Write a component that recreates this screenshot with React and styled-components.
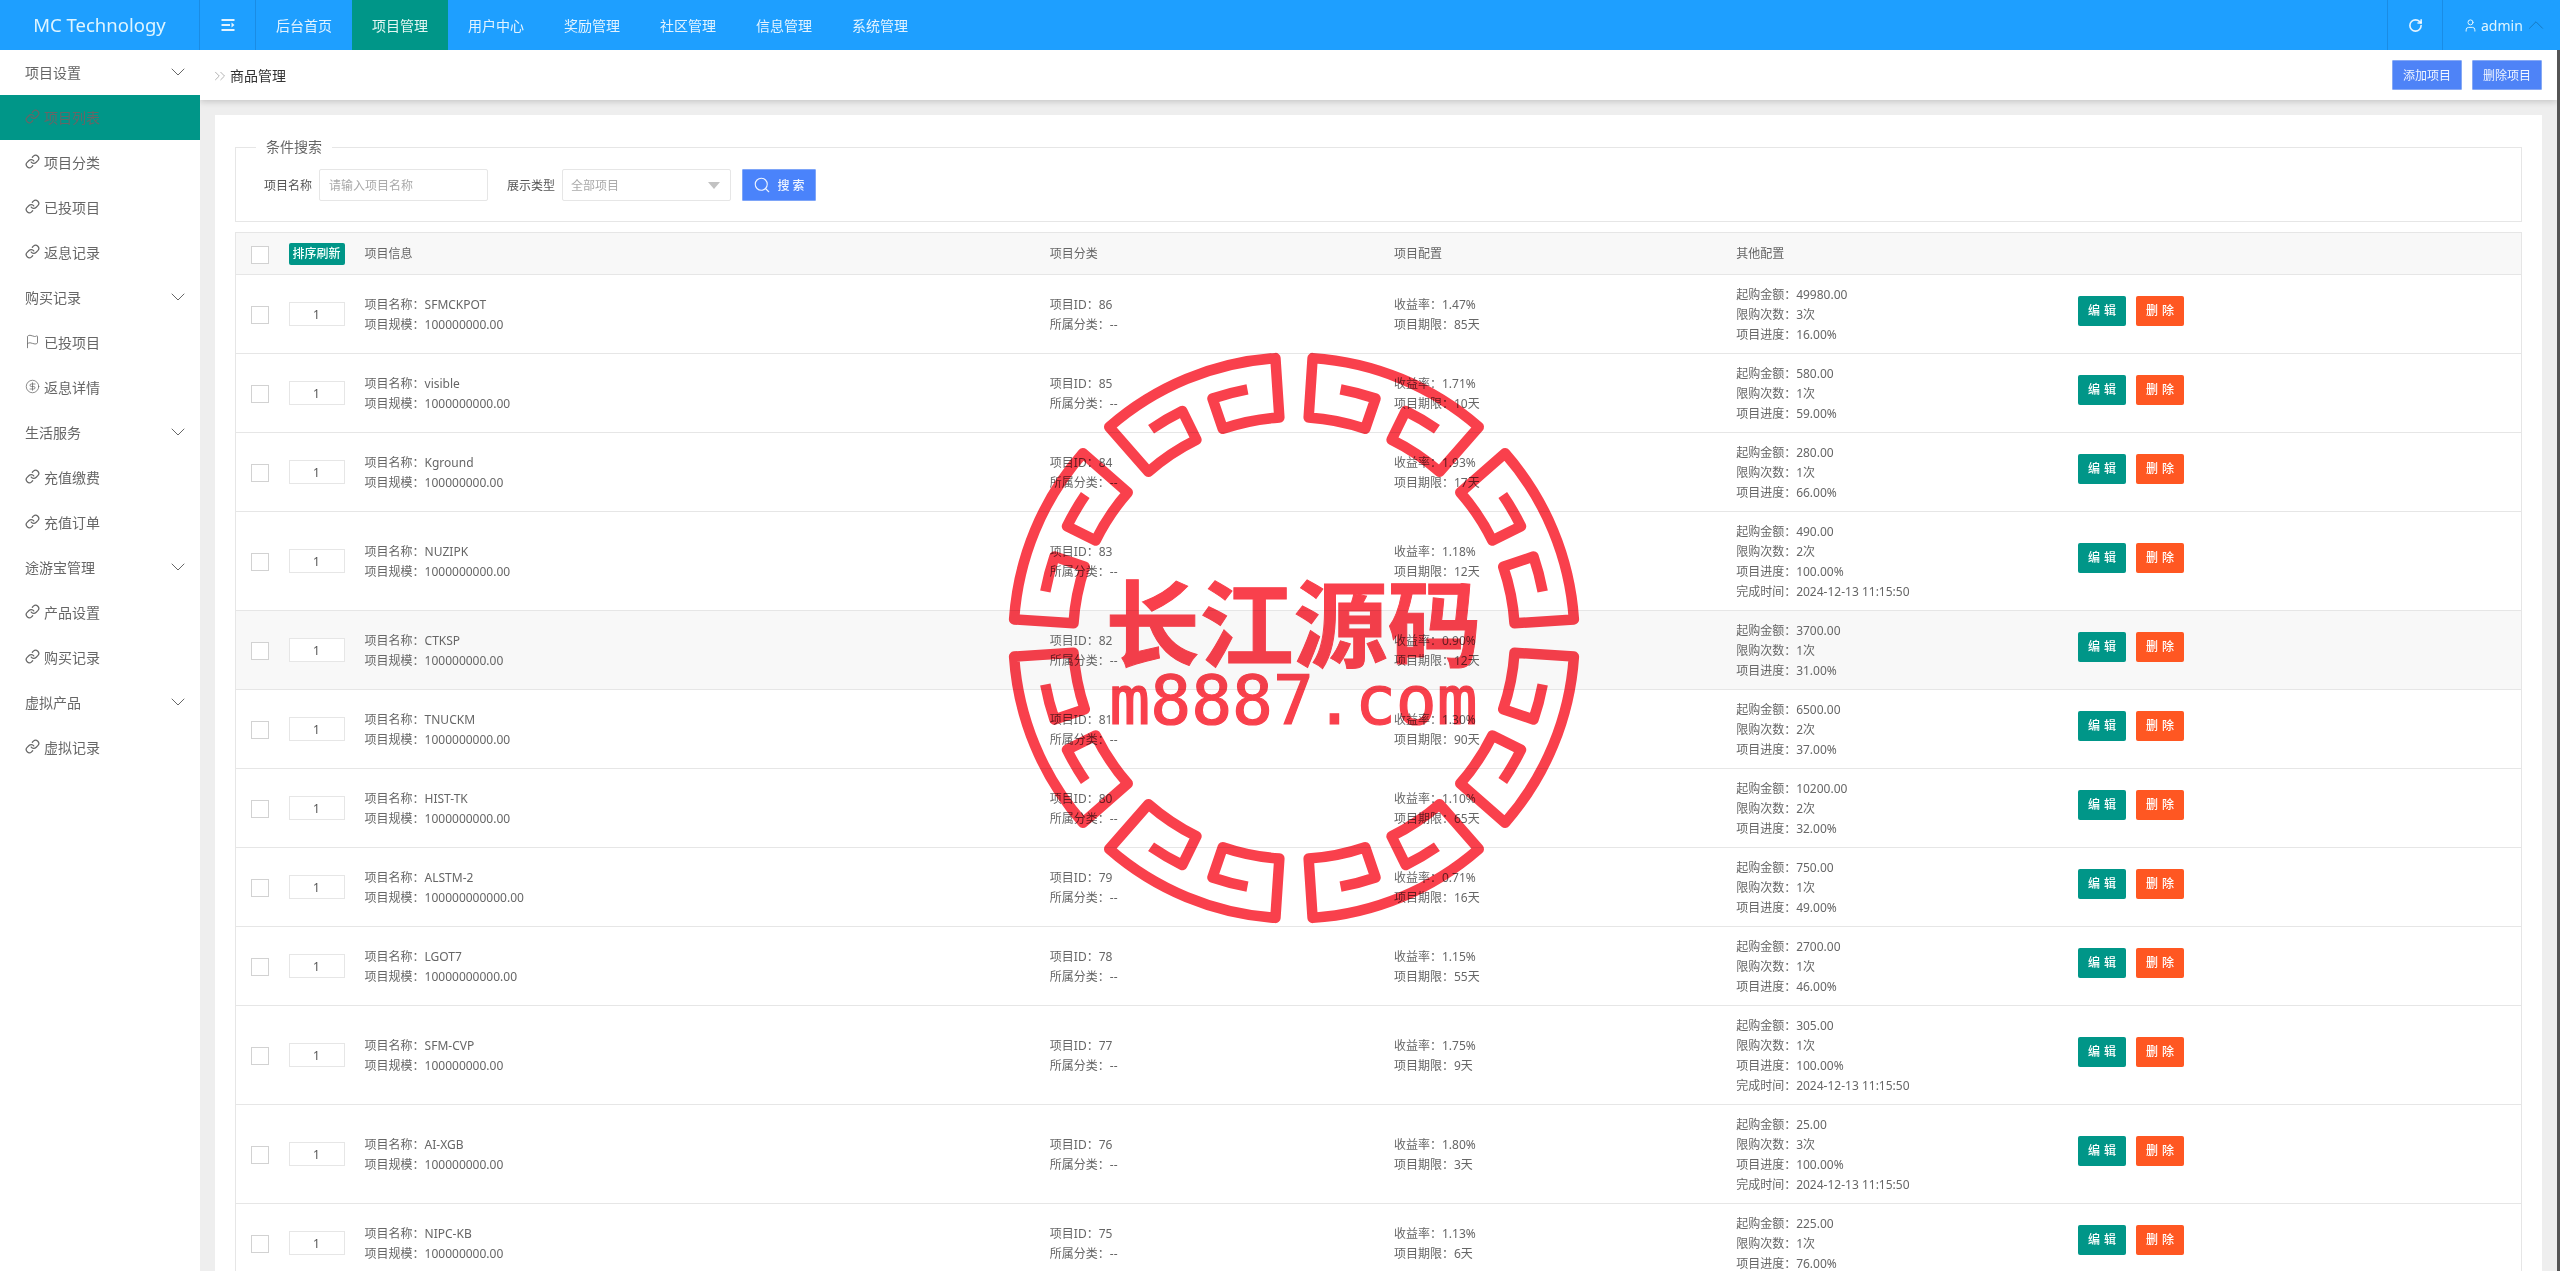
import React from "react";
import styled, { createGlobalStyle } from "styled-components";
import { ChevronDown, ChevronUp, ChevronsRight, CircleDollarSign, Flag, Link, RotateCw, Search, User } from "lucide-react";

const FONT = `"Noto Sans", "Noto Sans CJK SC", sans-serif`;

const Global = createGlobalStyle`
  * { box-sizing: border-box; }
  html, body { margin: 0; padding: 0; height: 100%; overflow: hidden; background: #fff; }
  body { font-family: ${FONT}; font-size: 12px; color: #666; }
`;

const Shell = styled.div`
  position: relative;
  display: flex;
  flex-direction: column;
  height: 100vh;
  overflow: hidden;
`;

/* ---------- top bar ---------- */
const TopBar = styled.header`
  display: flex;
  flex: 0 0 50px;
  height: 50px;
  background: #1e9fff;
  color: rgba(255, 255, 255, 0.88);
`;
const Logo = styled.div`
  flex: 0 0 200px;
  display: flex;
  align-items: center;
  justify-content: center;
  border-right: 1px solid #1a8ce4;
  font-size: 18.5px;
  color: #dff5ff;
  padding-bottom: 2px;
`;
const MenuToggle = styled.div`
  flex: 0 0 56px;
  display: flex;
  align-items: center;
  justify-content: center;
  border-right: 1px solid #1a8ce4;
`;
const NavItem = styled.div`
  flex: 0 0 96px;
  display: flex;
  align-items: center;
  justify-content: center;
  font-size: 14px;
  background: ${(p) => (p.$active ? "#009688" : "transparent")};
  color: ${(p) => (p.$active ? "#e4f7f3" : "inherit")};
`;
const Spacer = styled.div`
  flex: 1;
`;
const RefreshCell = styled.div`
  flex: 0 0 56px;
  display: flex;
  align-items: center;
  justify-content: center;
  border-left: 1px solid #1a8ce4;
  border-right: 1px solid #1a8ce4;
`;
const UserCell = styled.div`
  flex: 0 0 117px;
  display: flex;
  align-items: center;
  padding-left: 20px;
  font-size: 14px;
  gap: 3px;
  color: #dff5ff;
`;
const UserCaret = styled(ChevronUp)`
  color: #1578c0;
  margin-left: -3px;
`;

/* ---------- layout ---------- */
const Body = styled.div`
  flex: 1;
  display: flex;
  min-height: 0;
`;
const Sidebar = styled.nav`
  flex: 0 0 200px;
  background: #fff;
`;
const SideRow = styled.div`
  display: flex;
  align-items: center;
  height: 45px;
  padding: 0 10px 2px 25px;
  font-size: 14px;
  color: #666;
  background: ${(p) => (p.$active ? "#009688" : "#fff")};
  justify-content: ${(p) => (p.$group ? "space-between" : "flex-start")};
  gap: 4px;
`;
const Main = styled.main`
  flex: 1;
  min-width: 0;
  background: #eee;
  border-right: 3px solid #555;
  overflow: hidden;
`;
const SubHeader = styled.div`
  position: relative;
  height: 50px;
  background: #fff;
  display: flex;
  align-items: center;
  justify-content: space-between;
  padding: 0 15px;
  box-shadow: 0 2px 6px rgba(0, 0, 0, 0.16);
`;
const Crumb = styled.div`
  display: flex;
  align-items: center;
  gap: 1px;
  font-size: 14px;
  color: #333;
  padding-bottom: 1px;
  svg { color: #999; margin-left: -4px; margin-top: 3px; }
`;
const TopActions = styled.div`
  display: flex;
  gap: 10px;
`;
const BlueButton = styled.button`
  height: 30px;
  width: 70px;
  padding: 0;
  font: inherit;
  font-size: 12px;
  color: #f0f5ff;
  background: #4e83f7;
  border: 1px solid #86a9f5;
  border-radius: 1px;
`;
const Card = styled.section`
  margin: 15px 15px 0;
  padding: 22px 20px 0;
  background: #fff;
`;

/* ---------- search ---------- */
const SearchBox = styled.fieldset`
  margin: 0 0 10px;
  padding: 12px 28px 20px;
  border: 1px solid #e6e6e6;
  height: 85px;
  min-width: 0;
`;
const SearchLegend = styled.legend`
  margin-left: -8px;
  padding: 0 10px;
  font-size: 14px;
  line-height: 20px;
  color: #666;
`;
const SearchRow = styled.div`
  display: flex;
  align-items: center;
`;
const FieldLabel = styled.label`
  font-size: 12px;
  color: #555;
  margin-right: 7px;
`;
const TextField = styled.input`
  width: 169px;
  height: 32px;
  padding: 0 9px;
  margin-right: 19px;
  font: inherit;
  font-size: 12px;
  border: 1px solid #e6e6e6;
  border-radius: 2px;
  &::placeholder { color: #aaa; opacity: 1; }
`;
const SelectBox = styled.div`
  display: flex;
  align-items: center;
  justify-content: space-between;
  width: 169px;
  height: 32px;
  padding: 0 10px 0 8px;
  margin-right: 11px;
  border: 1px solid #e6e6e6;
  border-radius: 2px;
  color: #aaa;
  &::after {
    content: "";
    border: 6px solid transparent;
    border-top: 7px solid #c2c2c2;
    border-bottom: 0;
  }
`;
const SearchButton = styled.button`
  display: flex;
  align-items: center;
  justify-content: center;
  gap: 6px;
  width: 74px;
  height: 32px;
  padding: 0;
  font: inherit;
  font-size: 12px;
  font-weight: 500;
  color: #eef4ff;
  background: #4a83fb;
  border: 1px solid #7ea5f8;
  border-radius: 1px;
`;

/* ---------- table ---------- */
const Table = styled.table`
  width: 2287px;
  table-layout: fixed;
  border-collapse: collapse;
  border: 1px solid #e6e6e6;
  font-size: 12px;
  line-height: 20px;
  color: #666;
`;
const HeadRow = styled.tr`
  height: 42px;
  background: #f8f8f8;
`;
const Row = styled.tr`
  background: ${(p) => (p.$hover ? "#f8f8f8" : "#fff")};
`;
const Th = styled.th`
  padding: 0;
  font-weight: 400;
  text-align: left;
  border-bottom: 1px solid #e6e6e6;
`;
const Td = styled.td`
  padding: ${(p) => (p.$text ? "10px 0 8px" : "9px 0")};
  vertical-align: middle;
  border-bottom: 1px solid #e6e6e6;
`;
const CheckCell = styled.div`
  padding-left: 15px;
  display: flex;
  padding-top: 2px;
`;
const Check = styled.input.attrs({ type: "checkbox" })`
  appearance: none;
  display: block;
  width: 18px;
  height: 18px;
  margin: 0;
  background: #fff;
  border: 1px solid #d2d2d2;
`;
const SortButton = styled.button`
  display: block;
  width: 56px;
  height: 22px;
  padding: 0;
  font: inherit;
  font-size: 12px;
  font-weight: 500;
  line-height: 22px;
  color: #f2fffb;
  background: #009688;
  border: 0;
  border-radius: 2px;
`;
const SortInput = styled.input`
  display: block;
  width: 56px;
  height: 24px;
  padding: 0;
  font: inherit;
  font-size: 12px;
  color: #555;
  text-align: center;
  background: #fff;
  border: 1px solid #e6e6e6;
`;
const Line = styled.div`
  white-space: nowrap;
`;
const RowActions = styled.div`
  display: flex;
  gap: 10px;
  margin-bottom: 6px;
`;
const RowButton = styled.button`
  width: 48px;
  height: 30px;
  padding: 0;
  font: inherit;
  font-size: 12px;
  font-weight: 500;
  letter-spacing: 0.5px;
  color: #fff;
  background: ${(p) => (p.$danger ? "#ff5722" : "#009688")};
  border: 0;
  border-radius: 2px;
`;

/* ---------- stamp ---------- */
const Stamp = styled.div`
  position: absolute;
  left: 1003.5px;
  top: 347.5px;
  width: 580px;
  height: 580px;
  display: flex;
  flex-direction: column;
  align-items: center;
  pointer-events: none;
  mix-blend-mode: multiply;
  color: #f9404c;
`;
const StampRing = styled.svg`
  position: absolute;
  inset: 0;
`;
const StampTitle = styled.div`
  margin-top: 221px;
  font-family: "Noto Sans CJK SC", sans-serif;
  font-weight: 700;
  font-size: 94px;
  line-height: 100px;
  white-space: nowrap;
  -webkit-text-stroke: 1px #f9404c;
`;
const StampSite = styled.div`
  margin-top: -2px;
  font-family: "DejaVu Sans Mono", monospace;
  font-size: 68px;
  line-height: 68px;
  white-space: nowrap;
  -webkit-text-stroke: 1.2px #f9404c;
`;

const pt = (r, deg) => {
  const a = (deg * Math.PI) / 180;
  return `${(r * Math.sin(a)).toFixed(2)} ${(-r * Math.cos(a)).toFixed(2)}`;
};
const arc = (r, deg, sweep) => `A ${r} ${r} 0 0 ${sweep} ${pt(r, deg)}`;
const KEY_PATH = [
  `M ${pt(253, 10.6)}`,
  arc(253, 18.8, 1),
  `L ${pt(221, 18.8)}`,
  arc(221, 3.8, 0),
  `L ${pt(280.5, 3.8)}`,
  arc(280.5, 41.2, 1),
  `L ${pt(221, 41.2)}`,
  arc(221, 26.2, 0),
  `L ${pt(253, 26.2)}`,
  arc(253, 34.4, 1),
].join(" ");

const ShrinkIcon = () => (
  <svg width="14" height="14" viewBox="0 0 14 14" fill="none" stroke="currentColor" strokeWidth="2">
    <path d="M0.5 2h13M0.5 7h8.5M0.5 12h13" />
    <path d="M10.5 4.5 13.5 7 10.5 9.5z" fill="currentColor" stroke="none" />
  </svg>
);

const SIDE = [
  { t: "项目设置", g: 1 },
  { t: "项目列表", a: 1 },
  { t: "项目分类" },
  { t: "已投项目" },
  { t: "返息记录" },
  { t: "购买记录", g: 1 },
  { t: "已投项目", i: "flag" },
  { t: "返息详情", i: "dollar" },
  { t: "生活服务", g: 1 },
  { t: "充值缴费" },
  { t: "充值订单" },
  { t: "途游宝管理", g: 1 },
  { t: "产品设置" },
  { t: "购买记录" },
  { t: "虚拟产品", g: 1 },
  { t: "虚拟记录" },
];
const NAV = ["后台首页", "项目管理", "用户中心", "奖励管理", "社区管理", "信息管理", "系统管理"];
const DONE = "2024-12-13 11:15:50";
const ROWS = [
  [86, "SFMCKPOT", "100000000.00", "1.47%", "85天", "49980.00", "3次", "16.00%"],
  [85, "visible", "1000000000.00", "1.71%", "10天", "580.00", "1次", "59.00%"],
  [84, "Kground", "100000000.00", "1.93%", "17天", "280.00", "1次", "66.00%"],
  [83, "NUZIPK", "1000000000.00", "1.18%", "12天", "490.00", "2次", "100.00%", DONE],
  [82, "CTKSP", "100000000.00", "0.90%", "12天", "3700.00", "1次", "31.00%"],
  [81, "TNUCKM", "1000000000.00", "1.30%", "90天", "6500.00", "2次", "37.00%"],
  [80, "HIST-TK", "1000000000.00", "1.10%", "65天", "10200.00", "2次", "32.00%"],
  [79, "ALSTM-2", "100000000000.00", "0.71%", "16天", "750.00", "1次", "49.00%"],
  [78, "LGOT7", "10000000000.00", "1.15%", "55天", "2700.00", "1次", "46.00%"],
  [77, "SFM-CVP", "100000000.00", "1.75%", "9天", "305.00", "1次", "100.00%", DONE],
  [76, "AI-XGB", "100000000.00", "1.80%", "3天", "25.00", "3次", "100.00%", DONE],
  [75, "NIPC-KB", "100000000.00", "1.13%", "6天", "225.00", "1次", "76.00%"],
];
const COLS = [53, 76, 685, 344, 342, 342, 443];

const SideIcon = ({ kind }) => {
  if (kind === "flag") return <Flag size={15} strokeWidth={1.3} />;
  if (kind === "dollar") return <CircleDollarSign size={15} strokeWidth={1.2} />;
  return <Link size={15} strokeWidth={2} />;
};

export default function App() {
  return (
    <Shell>
      <Global />
      <TopBar>
        <Logo>MC Technology</Logo>
        <MenuToggle><ShrinkIcon /></MenuToggle>
        {NAV.map((n, i) => (
          <NavItem key={n} $active={i === 1}>{n}</NavItem>
        ))}
        <Spacer />
        <RefreshCell><RotateCw size={15} strokeWidth={2.6} /></RefreshCell>
        <UserCell>
          <User size={15} strokeWidth={1.6} />
          admin
          <UserCaret size={26} strokeWidth={0.9} />
        </UserCell>
      </TopBar>
      <Body>
        <Sidebar>
          {SIDE.map((s, i) => (
            <SideRow key={i} $group={!!s.g} $active={!!s.a}>
              {!s.g && <SideIcon kind={s.i} />}
              {s.t}
              {s.g && <ChevronDown size={24} strokeWidth={1} />}
            </SideRow>
          ))}
        </Sidebar>
        <Main>
          <SubHeader>
            <Crumb>
              <ChevronsRight size={18} strokeWidth={1} />
              商品管理
            </Crumb>
            <TopActions>
              <BlueButton>添加项目</BlueButton>
              <BlueButton>删除项目</BlueButton>
            </TopActions>
          </SubHeader>
          <Card>
            <SearchBox>
              <SearchLegend>条件搜索</SearchLegend>
              <SearchRow>
                <FieldLabel>项目名称</FieldLabel>
                <TextField placeholder="请输入项目名称" />
                <FieldLabel>展示类型</FieldLabel>
                <SelectBox>全部项目</SelectBox>
                <SearchButton>
                  <Search size={18} strokeWidth={1.5} />
                  搜 索
                </SearchButton>
              </SearchRow>
            </SearchBox>
            <Table>
              <colgroup>
                {COLS.map((w, i) => (
                  <col key={i} width={w} />
                ))}
              </colgroup>
              <thead>
                <HeadRow>
                  <Th><CheckCell><Check /></CheckCell></Th>
                  <Th><SortButton>排序刷新</SortButton></Th>
                  <Th>项目信息</Th>
                  <Th>项目分类</Th>
                  <Th>项目配置</Th>
                  <Th>其他配置</Th>
                  <Th />
                </HeadRow>
              </thead>
              <tbody>
                {ROWS.map((r) => (
                  <Row key={r[0]} $hover={r[0] === 82}>
                    <Td><CheckCell><Check /></CheckCell></Td>
                    <Td><SortInput defaultValue="1" /></Td>
                    <Td $text>
                      <Line>项目名称：{r[1]}</Line>
                      <Line>项目规模：{r[2]}</Line>
                    </Td>
                    <Td $text>
                      <Line>项目ID：{r[0]}</Line>
                      <Line>所属分类：--</Line>
                    </Td>
                    <Td $text>
                      <Line>收益率：{r[3]}</Line>
                      <Line>项目期限：{r[4]}</Line>
                    </Td>
                    <Td $text>
                      <Line>起购金额：{r[5]}</Line>
                      <Line>限购次数：{r[6]}</Line>
                      <Line>项目进度：{r[7]}</Line>
                      {r[8] && <Line>完成时间：{r[8]}</Line>}
                    </Td>
                    <Td>
                      <RowActions>
                        <RowButton>编 辑</RowButton>
                        <RowButton $danger>删 除</RowButton>
                      </RowActions>
                    </Td>
                  </Row>
                ))}
              </tbody>
            </Table>
          </Card>
        </Main>
      </Body>
      <Stamp>
        <StampRing viewBox="-290 -290 580 580" width="580" height="580" fill="none" stroke="currentColor" strokeWidth="10.5" strokeLinejoin="round">
          {[0, 1, 2, 3, 4, 5, 6, 7].map((k) => (
            <path key={k} d={KEY_PATH} transform={`rotate(${k * 45})`} />
          ))}
        </StampRing>
        <StampTitle>长江源码</StampTitle>
        <StampSite>m8887.com</StampSite>
      </Stamp>
    </Shell>
  );
}
